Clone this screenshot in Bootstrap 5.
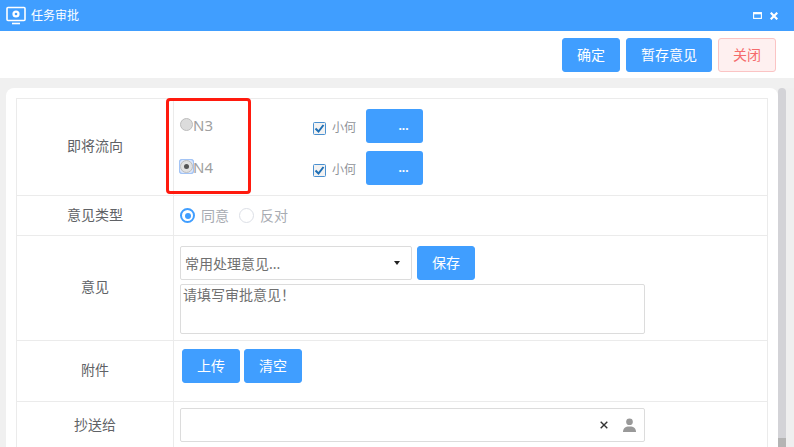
<!DOCTYPE html>
<html lang="zh">
<head>
<meta charset="utf-8">
<title>任务审批</title>
<link href="https://cdn.jsdelivr.net/npm/bootstrap@5.3.0/dist/css/bootstrap.min.css" rel="stylesheet">
<style>
html,body{height:447px;overflow:hidden;margin:0}
body{width:794px;background:#f0f0f0;font-family:"Noto Sans","Noto Sans CJK SC",sans-serif;font-size:14px;color:#606266;position:relative}
.dlg-head{height:31px;background:#409eff;color:#fff;padding:0 16px 0 6px}
.dlg-title{font-size:12px;margin-left:5px;line-height:1}
.dlg-tools{height:47px;background:#fff;padding:7px 18px 0 0;gap:6px}
.pri-btn{background:#409eff;border:1px solid #409eff;color:#fff;font-size:14px;height:34px;padding:0;border-radius:3px;line-height:1;display:inline-flex;align-items:center;justify-content:center}
.btn-close-alt{background:#fef0f0;border:1px solid #fbc4c4;color:#f56c6c}
.pane{margin:10px 0 0 0;height:359px;position:relative}
.pane-card{margin-left:6px;width:772px;height:359px;background:#fff;border-radius:8px 8px 0 0;padding:10px 10px 0 10px;overflow:hidden}
.form-tb{width:752px;table-layout:fixed;border-collapse:collapse;margin:0;color:#606266}
.form-tb td{border:1px solid #ebebeb;padding:0;vertical-align:middle}
.form-tb td.lab{width:157px;text-align:center;color:#606266;font-size:14px;padding-bottom:3px}
.form-tb td.val{padding-left:6px}
.form-tb td.sel-cell{padding-top:4px}
.form-tb td.pick-cell{padding-bottom:1px}
.r1{height:97px}.r2{height:40px}.r3{height:105px}.r4{height:61px}.r5{height:48px}
.flow-row{height:42px}
.flow-name{width:133px;color:#a0a0a0;font-size:15px;line-height:1;margin-top:-2px}
.rd-wrap{width:13px;height:13px;flex:none;margin-top:-2px;display:flex}
.rd{width:13px;height:13px;border-radius:50%;background:#dcdcdc;border:1px solid #bdbdbd;display:block;position:relative}
.rd-on{outline:1px solid #a3c4f5;outline-offset:0;border-radius:2px;box-shadow:0 0 0 1px #a3c4f5;background:#dbe6fa}
.rd-on .rd{background:#e2e2e2}
.rd-on .rd::after{content:"";position:absolute;left:3px;top:3px;width:5px;height:5px;border-radius:50%;background:#555}
.chk{width:13px;height:13px;flex:none;margin-right:6px;margin-top:4px}
.who{font-size:12px;color:#909399;width:34px;margin-top:4px}
.dot-btn{width:57px;height:34px;background:#409eff;border:0;border-radius:3px;color:#fff;font-size:12px;font-weight:700;padding:0 0 0 18px;line-height:1}
.ro{width:15px;height:15px;border-radius:50%;border:1px solid #dcdfe6;background:#fff;flex:none}
.ro-on{border:2px solid #409eff;position:relative}
.ro-on::after{content:"";position:absolute;left:2.5px;top:2.5px;width:6px;height:6px;border-radius:50%;background:#409eff}
.ro-txt{color:#a8abb2;font-size:14px;margin-left:6px;margin-right:10px}
.sel-box{width:232px;height:34px;border:1px solid #dcdcdc;border-radius:2px;padding:0 11px 0 4px;color:#707070;font-size:14px;background:#fff}
.caret-dn{width:0;height:0;border-left:3.5px solid transparent;border-right:3.5px solid transparent;border-top:4px solid #222}
.note{width:465px;height:50px;border:1px solid #dcdcdc;border-radius:2px;padding:0 2px;margin-top:4px;color:#707070;font-size:14px;line-height:20px}
.save-btn{margin-left:5px;width:58px}
.up-btn{width:58px;margin-right:4px}
.up-row{margin-bottom:10px}
.pick{width:465px;height:34px;border:1px solid #dcdcdc;border-radius:2px;padding-right:8px}
.x-mark{width:8px;height:8px;margin-right:15px}
.sb-track{position:absolute;left:778px;top:88px;width:16px;height:359px;background:#efefef}
.sb-thumb{width:8px;height:350px;background:#d3d3d7;border-radius:4px 4px 0 0}
.sb-end{width:8px;height:9px;background:#b4b4b4}
.mark-box{position:absolute;left:166px;top:98px;width:85px;height:96px;border:3px solid #ff1a0e;border-radius:4px;pointer-events:none}
</style>
</head>
<body>
<div class="dlg-head d-flex align-items-center">
  <svg width="20" height="19" viewBox="0 0 20 19" fill="none"><rect x="1" y="1.5" width="18" height="13" rx="1" stroke="#fff" stroke-width="1.6"/><path d="M6 17.500h8" stroke="#fff" stroke-width="1.6"/><circle cx="10" cy="8" r="3.6" fill="#fff"/><circle cx="10" cy="8" r="1.3" fill="#409eff"/></svg>
  <span class="dlg-title">任务审批</span>
  <div class="ms-auto d-flex align-items-center gap-2">
    <svg width="9" height="7" viewBox="0 0 9 7" fill="none"><rect x=".6" y=".6" width="7.8" height="5.800" stroke="#fff" stroke-width="1.100"/><path d="M.6 1.500h7.800" stroke="#fff" stroke-width="1.600"/></svg>
    <svg width="8" height="8" viewBox="0 0 8 8"><path d="M.7.7l6.600 6.600M7.300.7L.7 7.300" stroke="#fff" stroke-width="2.200"/></svg>
  </div>
</div>
<div class="dlg-tools d-flex justify-content-end align-items-start">
  <button type="button" class="pri-btn" style="width:58px">确定</button>
  <button type="button" class="pri-btn" style="width:86px">暂存意见</button>
  <button type="button" class="pri-btn btn-close-alt" style="width:58px">关闭</button>
</div>
<div class="pane">
  <div class="pane-card">
    <table class="form-tb">
      <tr class="r1">
        <td class="lab">即将流向</td>
        <td class="val">
          <div class="flow-row d-flex align-items-center">
            <div class="flow-name d-flex align-items-center"><span class="rd-wrap"><span class="rd"></span></span><span>N3</span></div>
            <svg class="chk" viewBox="0 0 13 13"><rect x=".5" y=".5" width="12" height="12" rx="1" fill="#f2f2f2" stroke="#4a90d0"/><path d="M2.500 6.500l3 3 5-6.500" fill="none" stroke="#1f6fb5" stroke-width="2"/></svg>
            <span class="who">小何</span>
            <button type="button" class="dot-btn">...</button>
          </div>
          <div class="flow-row d-flex align-items-center">
            <div class="flow-name d-flex align-items-center"><span class="rd-wrap rd-on"><span class="rd"></span></span><span>N4</span></div>
            <svg class="chk" viewBox="0 0 13 13"><rect x=".5" y=".5" width="12" height="12" rx="1" fill="#f2f2f2" stroke="#4a90d0"/><path d="M2.500 6.500l3 3 5-6.500" fill="none" stroke="#1f6fb5" stroke-width="2"/></svg>
            <span class="who">小何</span>
            <button type="button" class="dot-btn">...</button>
          </div>
        </td>
      </tr>
      <tr class="r2">
        <td class="lab">意见类型</td>
        <td class="val">
          <div class="d-flex align-items-center">
            <span class="ro ro-on"></span><span class="ro-txt">同意</span>
            <span class="ro"></span><span class="ro-txt">反对</span>
          </div>
        </td>
      </tr>
      <tr class="r3">
        <td class="lab">意见</td>
        <td class="val sel-cell">
          <div class="d-flex">
            <div class="sel-box d-flex align-items-center justify-content-between"><span>常用处理意见...</span><span class="caret-dn"></span></div>
            <button type="button" class="pri-btn save-btn">保存</button>
          </div>
          <div class="note">请填写审批意见！</div>
        </td>
      </tr>
      <tr class="r4">
        <td class="lab">附件</td>
        <td class="val ps-2">
          <div class="d-flex up-row">
            <button type="button" class="pri-btn up-btn">上传</button>
            <button type="button" class="pri-btn up-btn">清空</button>
          </div>
        </td>
      </tr>
      <tr class="r5">
        <td class="lab">抄送给</td>
        <td class="val pick-cell">
          <div class="pick d-flex align-items-center justify-content-end">
            <svg class="x-mark" viewBox="0 0 8 8"><path d="M.7.7l6.600 6.600M7.300.7L.7 7.300" stroke="#333" stroke-width="1.400"/></svg>
            <svg width="13" height="14" viewBox="0 0 14 15"><circle cx="7" cy="4" r="3.6" fill="#999"/><path d="M0 15c0-4 2.500-5.500 5-6h4c2.500.5 5 2 5 6z" fill="#999"/></svg>
          </div>
        </td>
      </tr>
    </table>
  </div>
</div>
<div class="sb-track"><div class="sb-thumb"></div><div class="sb-end"></div></div>
<div class="mark-box"></div>
<script src="https://cdn.jsdelivr.net/npm/bootstrap@5.3.0/dist/js/bootstrap.bundle.min.js"></script>
</body>
</html>
